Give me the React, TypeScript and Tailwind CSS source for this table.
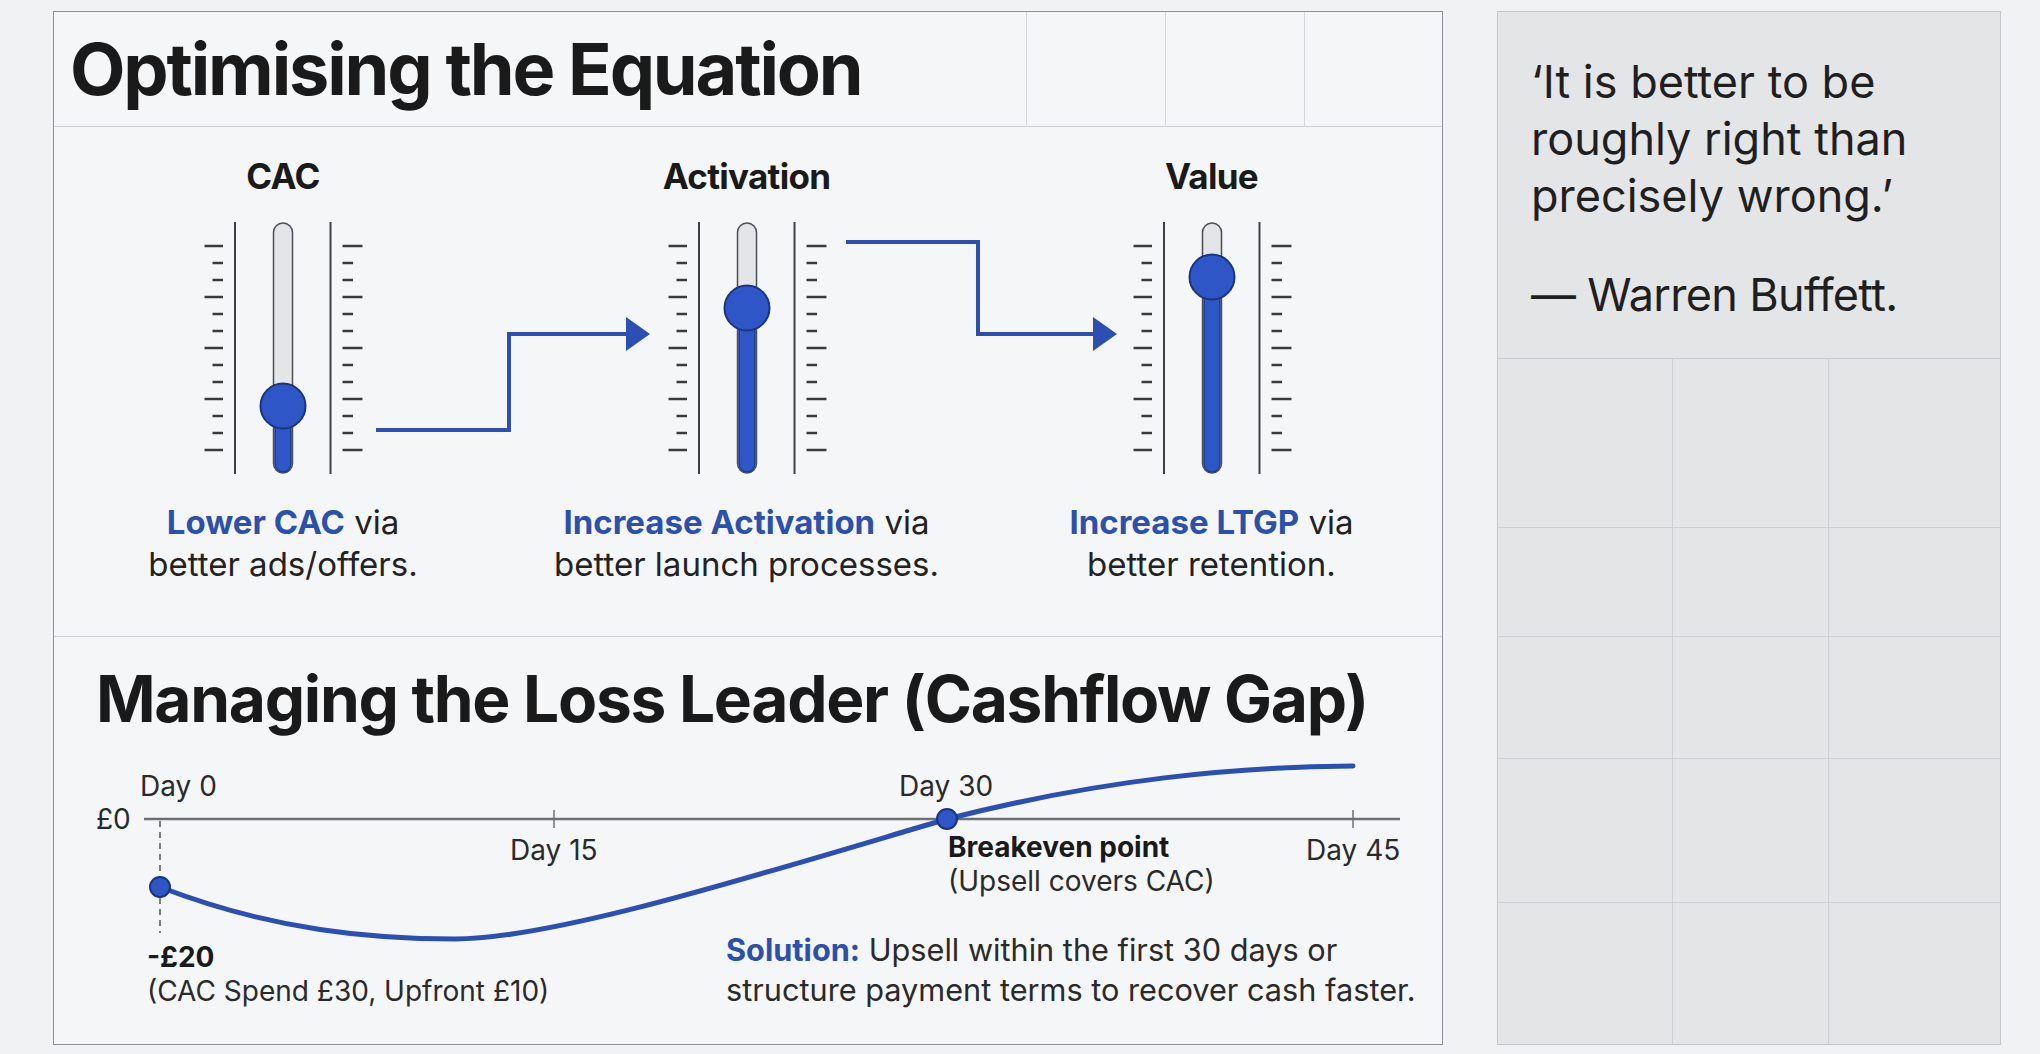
import React from 'react'

const ticks = Array.from({ length: 13 }, (_, i) => i)

function Slider({ knob }: { knob: number }) {
  return (
    <svg width="160" height="252" viewBox="0 0 160 252" className="block">
      {ticks.map((i) => {
        const y = 24 + i * 17
        const long = i % 3 === 0
        return (
          <g key={i} stroke="#3a3a3a" strokeWidth="2.5">
            <line x1={long ? 1.5 : 9.5} x2={20} y1={y} y2={y} />
            <line x1={139.5} x2={long ? 159.5 : 150} y1={y} y2={y} />
          </g>
        )
      })}
      <line x1="32" y1="0" x2="32" y2="252" stroke="#3f3f46" strokeWidth="2" />
      <line x1="127.5" y1="0" x2="127.5" y2="252" stroke="#3f3f46" strokeWidth="2" />
      <rect x="70.5" y="1" width="19" height="250" rx="9.5" fill="#e4e5e7" stroke="#4b5058" strokeWidth="1.5" />
      <rect x="72" y={knob} width="16" height={250 - knob} rx="8" fill="#2f56c6" stroke="#1f3a8a" strokeWidth="1.5" />
      <circle cx="80" cy={knob} r="22.5" fill="#2f56c6" stroke="#1c3480" strokeWidth="2" />
    </svg>
  )
}

const levers = [
  { label: 'CAC', knob: 184, strong: 'Lower CAC', rest: 'better ads/offers.' },
  { label: 'Activation', knob: 86, strong: 'Increase Activation', rest: 'better launch processes.' },
  { label: 'Value', knob: 55, strong: 'Increase LTGP', rest: 'better retention.' },
]

export default function App() {
  return (
    <div className="min-h-screen w-[2040px] h-[1054px] bg-[#f1f2f4] [font-family:Inter,sans-serif] text-[#1d1d1f] flex gap-[54px] pl-[53px] pt-[11px]">
      {/* left board */}
      <div className="w-[1390px] h-[1034px] border border-[#8e9197] bg-[#f5f6f8] flex flex-col">
        <div className="h-[115px] border-b border-[#cdd0d4] flex">
          <div className="flex-1 flex items-center pl-[16px]">
            <h1 className="text-[72px] leading-none font-bold tracking-[-0.03em] text-[#1a1a1a]">Optimising the Equation</h1>
          </div>
          <div className="w-[139px] border-l border-[#d5d7db]" />
          <div className="w-[139px] border-l border-[#d5d7db]" />
          <div className="w-[138px] border-l border-[#d5d7db]" />
        </div>

        <div className="relative h-[510px] border-b border-[#cdd0d4] grid grid-cols-[458px_469px_1fr]">
          {levers.map((l) => (
            <div key={l.label} className="flex flex-col items-center pt-[28px]">
              <div className="text-[35px] leading-[42px] font-bold tracking-[-0.02em] text-[#1a1a1a]">{l.label}</div>
              <div className="mt-[25px]">
                <Slider knob={l.knob} />
              </div>
              <p className="mt-[27px] text-center text-[33px] leading-[42px] text-[#222]">
                <span className="font-bold text-[#2b50ae]">{l.strong}</span> via
                <br />
                {l.rest}
              </p>
            </div>
          ))}
          <svg className="absolute left-0 top-0 pointer-events-none" width="1388" height="509" viewBox="0 0 1388 509">
            <path d="M322 303 H455 V207 H574" fill="none" stroke="#2c4fb3" strokeWidth="4" />
            <polygon points="572,190 596,207 572,224" fill="#2c4fb3" />
            <path d="M792 115 H924 V207 H1041" fill="none" stroke="#2c4fb3" strokeWidth="4" />
            <polygon points="1039,190 1063,207 1039,224" fill="#2c4fb3" />
          </svg>
        </div>

        <div className="flex-1 flex flex-col">
          <h2 className="mt-[30px] pl-[42px] text-[64px] leading-none font-bold tracking-[-0.02em] text-[#1a1a1a]">
            Managing the Loss Leader (Cashflow Gap)
          </h2>
          <div className="relative flex-1 text-[28px] leading-[34px] text-[#2a2a2a]">
            <svg className="absolute left-0 top-0" width="1388" height="313" viewBox="0 0 1388 313">
              <line x1="90" y1="88" x2="1346" y2="88" stroke="#6e6f73" strokeWidth="2.5" />
              <line x1="500" y1="79" x2="500" y2="97" stroke="#6e6f73" strokeWidth="1.5" />
              <line x1="1299" y1="79" x2="1299" y2="97" stroke="#6e6f73" strokeWidth="1.5" />
              <line x1="106" y1="90" x2="106" y2="202" stroke="#555" strokeWidth="1.5" strokeDasharray="6 5" />
              <path
                d="M106 156 C220 200, 320 208, 401 208 C500 208, 700 145, 893 88 C1050 48, 1180 36, 1299 35"
                fill="none"
                stroke="#2b4fb3"
                strokeWidth="5"
                strokeLinecap="round"
              />
              <circle cx="106" cy="156" r="10" fill="#2f56c6" stroke="#1c3480" strokeWidth="2" />
              <circle cx="893" cy="88" r="10" fill="#2f56c6" stroke="#1c3480" strokeWidth="2" />
            </svg>
            <span className="absolute left-[42px] top-[71px]">£0</span>
            <span className="absolute left-[86px] top-[38px]">Day 0</span>
            <span className="absolute left-[456px] top-[102px]">Day 15</span>
            <span className="absolute left-[845px] top-[38px]">Day 30</span>
            <span className="absolute left-[1252px] top-[102px]">Day 45</span>
            <div className="absolute left-[894px] top-[99px]">
              <div className="font-bold text-[#1a1a1a]">Breakeven point</div>
              <div>(Upsell covers CAC)</div>
            </div>
            <div className="absolute left-[93px] top-[209px]">
              <div className="font-bold text-[#1a1a1a]">-£20</div>
              <div>(CAC Spend £30, Upfront £10)</div>
            </div>
            <div className="absolute left-[672px] top-[199px] text-[30.7px] leading-[40px]">
              <div>
                <span className="font-bold text-[#2b50ae]">Solution:</span> Upsell within the first 30 days or
              </div>
              <div>structure payment terms to recover cash faster.</div>
            </div>
          </div>
        </div>
      </div>

      {/* right board */}
      <div className="w-[504px] h-[1034px] border border-[#c4c6ca] bg-[#e4e5e7] flex flex-col">
        <div className="h-[347px] border-b border-[#c9cbcf] pl-[33px] pt-[41px]">
          <p className="text-[45px] leading-[57px] text-[#1f1f1f]">
            ‘It is better to be
            <br />
            roughly right than
            <br />
            precisely wrong.’
          </p>
          <p className="mt-[42px] text-[45px] leading-[57px] text-[#1f1f1f] tracking-[-0.015em]">— Warren Buffett.</p>
        </div>
        <div className="flex-1 grid grid-cols-[175px_156px_1fr] grid-rows-[169px_109px_122px_144px_1fr]">
          {Array.from({ length: 15 }, (_, i) => (
            <div
              key={i}
              className={`border-[#cdcfd3] ${i % 3 !== 2 ? 'border-r' : ''} ${i < 12 ? 'border-b' : ''}`}
            />
          ))}
        </div>
      </div>
    </div>
  )
}
